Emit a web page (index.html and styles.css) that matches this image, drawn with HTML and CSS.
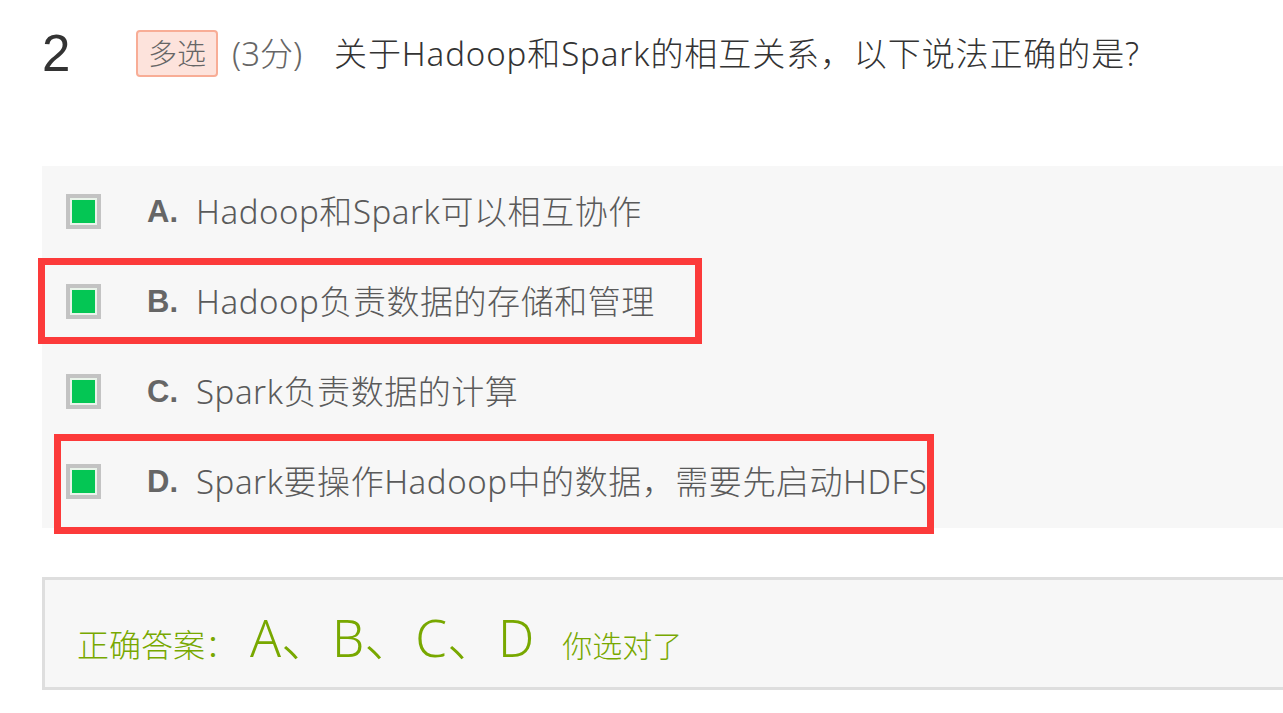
FILE: index.html
```html
<!DOCTYPE html>
<html lang="zh-CN">
<head>
<meta charset="utf-8">
<title>题目 2</title>
<link rel="stylesheet" href="styles.css">
</head>
<body>
<div class="question">
  <div class="q-head">
    <span class="q-num">2</span>
    <span class="q-type">多选</span>
    <span class="q-score">(3分)</span>
    <span class="q-title">关于Hadoop和Spark的相互关系，以下说法正确的是?</span>
  </div>
  <div class="options">
    <div class="opt">
      <span class="cb"><span class="cb-fill"></span></span>
      <span class="opt-letter">A.</span>
      <span class="opt-text">Hadoop和Spark可以相互协作</span>
    </div>
    <div class="opt">
      <span class="cb"><span class="cb-fill"></span></span>
      <span class="opt-letter">B.</span>
      <span class="opt-text">Hadoop负责数据的存储和管理</span>
    </div>
    <div class="opt">
      <span class="cb"><span class="cb-fill"></span></span>
      <span class="opt-letter">C.</span>
      <span class="opt-text">Spark负责数据的计算</span>
    </div>
    <div class="opt">
      <span class="cb"><span class="cb-fill"></span></span>
      <span class="opt-letter">D.</span>
      <span class="opt-text">Spark要操作Hadoop中的数据，需要先启动HDFS</span>
    </div>
    <div class="mark mark-b"></div>
    <div class="mark mark-d"></div>
  </div>
  <div class="answer">
    <span class="ans-label">正确答案：</span>
    <span class="ans-keys">A、B、C、D</span>
    <span class="ans-note">你选对了</span>
  </div>
</div>
</body>
</html>
```

FILE: styles.css
```css
html, body {
  margin: 0;
  padding: 0;
  background: #fff;
  overflow: hidden;
}

body {
  font-family: "Noto Sans", "Noto Sans CJK SC", sans-serif;
  font-weight: 300;
  color: #333;
}

.question {
  margin-left: 42px;
  margin-right: -40px;
}

.q-head {
  display: flex;
  align-items: center;
  height: 47px;
  margin-top: 30px;
}

.q-num {
  font-family: "Liberation Sans", "Noto Sans", sans-serif;
  font-weight: normal;
  font-size: 51px;
  color: #333;
  width: 94px;
  line-height: 1;
}

.q-type {
  box-sizing: border-box;
  height: 47px;
  display: inline-flex;
  align-items: center;
  padding: 0 10px;
  border: 2px solid #f8ad96;
  border-radius: 4px;
  background: #fde3dc;
  color: #666;
  font-size: 29px;
  line-height: 1;
}

.q-score {
  margin-left: 14px;
  font-size: 33px;
  color: #666;
  width: 102px;
  line-height: 1;
}

.q-title {
  font-size: 33px;
  letter-spacing: 0.9px;
  color: #333;
  line-height: 1;
}

.options {
  position: relative;
  margin-top: 89px;
  background: #f7f7f7;
  padding-bottom: 2px;
}

.opt {
  display: flex;
  align-items: center;
  height: 90px;
  padding-left: 24px;
}

.cb {
  box-sizing: border-box;
  width: 35px;
  height: 35px;
  border: 4px solid #c3c3c3;
  padding: 2px;
  background: #e9f4ea;
  display: flex;
}

.cb-fill {
  flex: 1;
  background: #04c654;
}

.opt-letter {
  font-family: "Liberation Sans", sans-serif;
  font-weight: bold;
  font-size: 31px;
  color: #666;
  margin-left: 46px;
  width: 49px;
  line-height: 1;
}

.opt-text {
  font-size: 33px;
  letter-spacing: 0.55px;
  color: #5a5a5a;
  line-height: 1;
}

.mark {
  position: absolute;
  box-sizing: border-box;
  border: 7px solid #fc3a3a;
  pointer-events: none;
}

.mark-b {
  left: -4px;
  top: 92px;
  width: 664px;
  height: 86px;
}

.mark-d {
  left: 12px;
  top: 268px;
  width: 880px;
  height: 100px;
}

.answer {
  margin-top: 49px;
  box-sizing: border-box;
  height: 113px;
  border: 3px solid #dedede;
  background: #f7f7f7;
  display: flex;
  align-items: baseline;
  padding: 18px 0 0 32px;
  color: #78a800;
}

.ans-label {
  font-size: 32px;
}

.ans-keys {
  font-size: 51px;
  margin-left: 13px;
}

.ans-note {
  font-size: 30px;
  margin-left: 28px;
}
```
